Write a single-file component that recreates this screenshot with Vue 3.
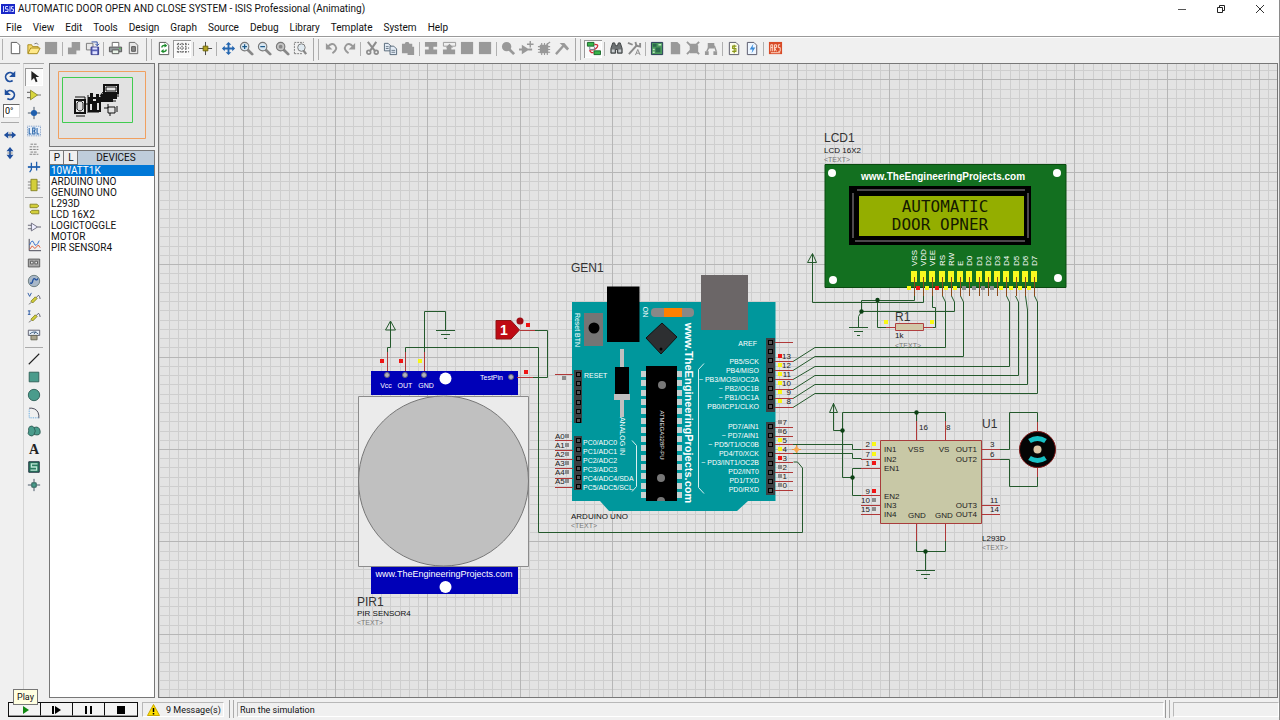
<script setup>
import { ref } from 'vue'

const angle = ref('0°')
const menus = ['File', 'View', 'Edit', 'Tools', 'Design', 'Graph', 'Source', 'Debug', 'Library', 'Template', 'System', 'Help']
const devices = ['10WATT1K', 'ARDUINO UNO', 'GENUINO UNO', 'L293D', 'LCD 16X2', 'LOGICTOGGLE', 'MOTOR', 'PIR SENSOR4']
const selected = ref('10WATT1K')

const toolbars = [
  [['new', 'open', 'save'], ['import', 'export'], ['print', 'area']],
  [['refresh', 'grid'], ['origin'], ['pan', 'zoomIn', 'zoomOut', 'zoomAll', 'zoomArea']],
  [['undo', 'redo'], ['cut', 'copy', 'paste'], ['blockCopy', 'blockMove', 'blockRotate', 'blockDelete'], ['pick', 'make', 'packaging', 'decompose']],
  [['autoroute'], ['search', 'assign'], ['explorer', 'newSheet', 'removeSheet', 'exitSheet'], ['bom', 'erc'], ['ares']]
]
const pressed = ['grid', 'autoroute', 'select']
const modes = [
  ['select', 'component', 'junction', 'label', 'script', 'bus', 'subcircuit'],
  ['terminal', 'pin', 'graph', 'tape', 'generator', 'voltage', 'current', 'instrument'],
  ['line', 'box', 'circle', 'arc', 'path', 'text', 'symbol', 'marker']
]

const G = '#999'
const sheet = (x, y, w, h, s = '#555', f = '#fff') =>
  `<path d="M${x} ${y}h${w - 3}l3 3v${h - 3}h-${w}z" fill="${f}" stroke="${s}"/>`
const lens = (mark, c = '#d8e6f0', s = '#777') =>
  `<path d="M9 9l5 5" stroke="#888" stroke-width="3" stroke-linecap="round"/><circle cx="6" cy="6" r="4.5" fill="${c}" stroke="${s}" stroke-width="1.2"/>${mark}`
const icons = {
  new: sheet(3.5, 1.5, 9, 12),
  open: '<path d="M2 13V4h4l1 2h6v2" fill="#f5d96b" stroke="#a68a1c"/><path d="M2 13.500l3-6h10l-3 6z" fill="#ffe98a" stroke="#a68a1c"/><path d="M9 3q3-2 4 1" fill="none" stroke="#777"/>',
  save: `<path d="M1 1h13v13H1z" fill="${G}"/>`,
  import: `<path d="M5 1h9v9h-4v4H1V7h4z" fill="${G}"/>`,
  export: '<path d="M1.500 2.500h7v7h-7z" fill="#e8e8e8" stroke="#777"/><path d="M6.500 6.500h8v8h-8z" fill="#5a62b8" stroke="#33398a"/><path d="M8 11h5v3H8zM8 7h5v2H8z" fill="#dfe2ff"/><path d="M7 1h6v4M11 3l2 2 2-2" fill="none" stroke="#2848a0"/>',
  print: '<path d="M4.500 6V1.500h7V6" fill="#fff" stroke="#666"/><path d="M1.500 6.500h13v5h-13z" fill="#92979a" stroke="#555"/><path d="M4.500 9.500h7v4h-7z" fill="#e9f4e9" stroke="#555"/><path d="M12 8h1.500" stroke="#3d3"/>',
  area: sheet(3.5, 1.5, 9, 12, '#666', '#e8e8e8') + '<path d="M6 6h4v5H6z" fill="#888" stroke="#555"/>',
  refresh: sheet(2.5, 1.5, 10, 13) + '<path d="M5 7q1-3 4-2M10 9q-1 3-4 2" fill="none" stroke="#1d8c2c" stroke-width="1.5"/><path d="M8 2.500l3 2.500-3 2zM7 8.500L4 11l3 2z" fill="#1d8c2c"/>',
  grid: '<path d="M2 3.500h13M2 7.500h13M2 11.500h13M3.500 2v12M7.500 2v12M11.500 2v12" stroke="#333" stroke-dasharray="1.500 1.500" fill="none"/>',
  origin: '<path d="M8 1v14M1 8h14" stroke="#444"/><path d="M5.500 5.500h5v5h-5z" fill="#b0a020" stroke="#6b6208"/>',
  pan: '<path d="M8 3v10M3 8h10" stroke="#2466b0" stroke-width="2"/><path d="M8 1l3 3H5zM8 15l3-3H5zM1 8l3-3v6zM15 8l-3-3v6z" fill="#2466b0"/>',
  zoomIn: lens('<path d="M3.500 6h5M6 3.500v5" stroke="#1d5a8a" stroke-width="1.300"/>'),
  zoomOut: lens('<path d="M3.500 6h5" stroke="#1d5a8a" stroke-width="1.300"/>'),
  zoomAll: lens('<circle cx="6" cy="6" r="2" fill="#888"/>', '#c4c4c4'),
  zoomArea: '<path d="M1.500 13.500v-12h10" fill="none" stroke="#777" stroke-dasharray="2 1"/><path d="M1.500 13.500h8" stroke="#777" stroke-dasharray="2 1"/><path d="M11 10l3 4" stroke="#888" stroke-width="2.500"/><circle cx="9" cy="7" r="4" fill="#dfe9f0" stroke="#777"/>',
  undo: `<path d="M4 6q5-5 8-1t-3 8" fill="none" stroke="${G}" stroke-width="2"/><path d="M2 2v7h7z" fill="${G}"/>`,
  redo: `<path d="M12 6q-5-5-8-1t3 8" fill="none" stroke="${G}" stroke-width="2"/><path d="M14 2v7H7z" fill="${G}"/>`,
  cut: `<path d="M3 1l8 10M12 1L5 11" stroke="#8d8d8d" stroke-width="2.200"/><circle cx="4" cy="12" r="2" fill="none" stroke="#8d8d8d" stroke-width="1.800"/><circle cx="12" cy="12" r="2" fill="none" stroke="#8d8d8d" stroke-width="1.800"/>`,
  copy: sheet(1.5, 2.5, 7, 8, '#567', '#e3ebf5') + sheet(7.5, 5.5, 7, 9, '#567', '#e3ebf5') + '<path d="M9 10h4M9 12h4M3 6h3M3 8h3" stroke="#678"/>',
  paste: `<path d="M1 3h3l1-2h3l1 2h3v3h2v9H7v-2H1z" fill="${G}"/>`,
  blockCopy: `<path d="M1 1h13v5h-4v3h4v5H1V9h4V6H1z" fill="${G}"/>`,
  blockMove: `<path d="M1.500 1.500h13v4h-13z" fill="none" stroke="${G}"/><path d="M8 3l4 4h-2v2h4v5H1V9h4V7H4z" fill="${G}"/>`,
  blockRotate: `<path d="M1 1h13v13H1z" fill="${G}"/>`,
  blockDelete: `<path d="M1 1h13v13H1z" fill="${G}"/>`,
  pick: `<circle cx="6" cy="6" r="5" fill="${G}"/><path d="M9 9l5 5" stroke="${G}" stroke-width="3"/>`,
  make: `<path d="M3 4l8 5-8 5zM0 8h3v2H0zM10 8h4v2h-4z" fill="${G}"/><path d="M12 0v7M8.500 3.500h7" stroke="${G}" stroke-width="1.500"/>`,
  packaging: `<path d="M3 4h9v9H3z" fill="${G}"/><path d="M1 6h13M1 9h13M1 12h13M5 2v13M8 2v13M11 2v13M10 4l4-3" stroke="${G}" stroke-width="1.200"/>`,
  decompose: `<path d="M1 14l8-9" stroke="${G}" stroke-width="2.500"/><path d="M5 2h5l5 6-2 2-5-5z" fill="${G}"/>`,
  autoroute: '<path d="M1.500 1.500h7v4h-7z" fill="#39b54a" stroke="#17642a"/><path d="M8.500 10.500h7v4h-7z" fill="#39b54a" stroke="#17642a"/><path d="M9 3.500q5 0 3 3t-6 3 0 3h2" fill="none" stroke="#d02c3a" stroke-width="1.300"/><path d="M4 6v3h5V6" fill="none" stroke="#789"/>',
  search: '<path d="M2 8l2-6h2l1 3h2l1-3h2l2 6v5h-5V9H7v4H2z" fill="#6d7173" stroke="#3d4142"/><path d="M3 9h3v3H3zM10 9h3v3h-3z" fill="#c9cdd0"/>',
  assign: `<path d="M2 14l9-10" stroke="#8a8a8a" stroke-width="2"/><path d="M9 1l1 4 4 1V2M1 2l5 2" stroke="#8a8a8a" stroke-width="2" fill="none"/><path d="M9 15l2.500-6 2.500 6M10 13h3" fill="none" stroke="#8a8a8a"/>`,
  explorer: '<path d="M1.500 1.500h12v13h-12z" fill="#4a9a5c" stroke="#235"/><path d="M3 3h4v3H3zM6 7h5v5H6z" fill="#2a6a4c"/><path d="M9 4h3M3 9h2M3 12h2" stroke="#bfe6c4" stroke-width="1.500"/>',
  newSheet: `<path d="M3 1h7l3 3v10H3z" fill="${G}"/>`,
  removeSheet: `<path d="M4 3h7l2 2v8H4z" fill="${G}"/><path d="M1 1l13 13M14 1L1 14" stroke="${G}" stroke-width="2"/>`,
  exitSheet: `<path d="M4 2h7v6H4zM1 11h4v4H1zM10 11h4v4h-4z" fill="${G}"/><path d="M3 11l2-4M11 5l2 6" stroke="${G}" stroke-width="1.500"/>`,
  bom: sheet(2.5, 1.5, 10, 13, '#556', '#fbfbe8') + '<path d="M10 5.500H6v2.500h3.500v3H5.500M7.700 4v9" fill="none" stroke="#8a9818" stroke-width="1.200"/>',
  erc: sheet(2.5, 1.5, 10, 13, '#556', '#eef6ff') + '<path d="M9 3L5 9h3l-1 4 4-6H8z" fill="#3a8ad8"/>',
  ares: '<path d="M1 1h14v13H1z" fill="#d84a26"/><path d="M3 11V4h2v7M3 7h2M7 11V4h2v3H7l2 4M13 4h-2v3h2v4h-2M3 12.500h10" fill="none" stroke="#ffe0d0"/>',
  select: '<path d="M5 1v11l3-3 2 5 2-1-2-5h4z" fill="#222"/>',
  component: '<path d="M0 5h4M0 11h4M11 8h5" stroke="#777" stroke-width="1.300"/><path d="M4 2.500L12 8l-8 5.500z" fill="#d8d63c" stroke="#88862a"/>',
  junction: '<path d="M8 1v14M1 8h14" stroke="#345"/><circle cx="8" cy="8" r="3.500" fill="#1f5fae"/>',
  label: '<path d="M0.500 2.500h15v11h-15z" fill="#e8f0fa" stroke="#6a8ab8" stroke-dasharray="1 1"/><path d="M2.500 4.500v7H5M6.500 4.500v7H9q1-2-1-3.500 2-1.500 1-3.500zM11.500 4.500v7H14" fill="none" stroke="#2462a8" stroke-width="1.200"/>',
  script: '<path d="M4 2.500h8M3 5.500h10M3 8.500h10M4 11.500h8M3 14h10" stroke="#777" stroke-dasharray="3 1"/>',
  bus: '<path d="M1 8h14" stroke="#1f5fae" stroke-width="2"/><path d="M5 3v8l-2 3M11 2v10" fill="none" stroke="#1f5fae" stroke-width="1.500"/>',
  subcircuit: '<path d="M1 4.500h14M1 8h14M1 11.500h14" stroke="#777"/><path d="M4.500 1.500h7v13h-7z" fill="#d3cf3a" stroke="#827f20"/>',
  terminal: '<path d="M3.500 2.500h8l2 2-2 2h-8zM5.500 9.500h8v4h-8l-2-2z" fill="#d3cf3a" stroke="#827f20"/>',
  pin: '<path d="M5 3.500L12 8l-7 4.500z" fill="#eef" stroke="#667"/><path d="M1 6h4M1 10h4M12 8h4" stroke="#556"/>',
  graph: '<path d="M2.500 1v13.500H16" fill="none" stroke="#334"/><path d="M3 8q3-8 5-2t6-3" fill="none" stroke="#2462c8"/><path d="M3 13l3-4 3 3 4-4 2 3" fill="none" stroke="#d84a26"/>',
  tape: '<path d="M1.500 3.500h13v9h-13z" fill="#a8a8a8" stroke="#555"/><path d="M4 6h3v3H4zM9 6h3v3H9z" fill="#e8e8e8" stroke="#555"/>',
  generator: '<circle cx="8" cy="8" r="6.500" fill="#a9b8c8" stroke="#677"/><path d="M3.500 10q2 2 3-2t3-2 3-1" fill="none" stroke="#1f4f9e" stroke-width="1.500"/>',
  voltage: '<path d="M1 1l2 4 2-4" fill="none" stroke="#1f4f9e"/><path d="M2 14l3-2 6-6" stroke="#777" fill="none"/><path d="M4.500 10.500l5-5 2 2-5 5z" fill="#d3cf3a" stroke="#827f20"/><path d="M11 6q3-5 4 2" fill="none" stroke="#556"/>',
  current: '<path d="M1 1h3M2.500 1v4M1 5h3" fill="none" stroke="#1f4f9e"/><path d="M2 14l3-2 6-6" stroke="#777" fill="none"/><path d="M4.500 10.500l5-5 2 2-5 5z" fill="#d3cf3a" stroke="#827f20"/><path d="M11 6q3-5 4 2" fill="none" stroke="#556"/>',
  instrument: '<path d="M1.500 2.500h13v6h-13z" fill="#e8f0f8" stroke="#556"/><path d="M3 7q5-5 10 0M8 7l2-3" fill="none" stroke="#357"/><path d="M4.500 8.500h7v5h-7z" fill="#aaa48c" stroke="#665"/>',
  line: '<path d="M2 14L14 2" stroke="#222" stroke-width="1.300"/>',
  box: '<path d="M2.500 2.500h11v11h-11z" fill="#4a9c8c" stroke="#2c5c54"/>',
  circle: '<circle cx="8" cy="8" r="6.500" fill="#4a9c8c" stroke="#2c5c54"/>',
  arc: '<path d="M2.500 2.500h3q7 1 8 8V14" fill="none" stroke="#334"/><path d="M2.500 4v9.500h11" fill="none" stroke="#49d" stroke-dasharray="1 1"/>',
  path: '<path d="M3 3q3-2 5 1 6-2 7 4t-7 4q-2 3-5 1t-1-5q-1-3 1-5z" fill="#4a9c8c" stroke="#2c5c54"/><path d="M8 4q3 4 0 8" fill="none" stroke="#2c5c54"/>',
  text: '<text x="8" y="14" text-anchor="middle" font-family="Liberation Serif, serif" font-weight="700" font-size="16" fill="#222">A</text>',
  symbol: '<path d="M2 2h12v12H2z" fill="#2c7d62" stroke="#123"/><path d="M12 4.500H5V8h6v3.500H4" fill="none" stroke="#bfe8d8" stroke-width="1.500"/>',
  marker: '<path d="M8 1v14M1 8h14" stroke="#345"/><path d="M5.500 5.500h5v5h-5z" fill="#4a9c8c" stroke="#2c5c54"/>',
  rotateCw: '<path d="M11 12a5 5 0 1 1 1-7" fill="none" stroke="#1f4f9e" stroke-width="2"/><path d="M14 1v7H7z" fill="#1f4f9e"/>',
  rotateCcw: '<path d="M5 12a5 5 0 1 0-1-7" fill="none" stroke="#1f4f9e" stroke-width="2"/><path d="M2 1v7h7z" fill="#1f4f9e"/>',
  flipH: '<path d="M3 8h10" stroke="#1f4f9e" stroke-width="2"/><path d="M1 8l5-4v8zM15 8l-5-4v8z" fill="#1f4f9e"/><path d="M8 5v6" stroke="#777"/>',
  flipV: '<path d="M8 3v10" stroke="#1f4f9e" stroke-width="2"/><path d="M8 1l4 5H4zM8 15l4-5H4z" fill="#1f4f9e"/><path d="M5 8h6" stroke="#777"/>'
}

// Snap grid of the sheet: ten minor cells to one major cell.
const STEP = 9.24
const range = (n) => Array.from({ length: n }, (_, i) => i)
const gridX = range(420).map((i) => ({ at: Math.round(150.2 + i * STEP - 159 + 159) + 0.5, major: i % 10 === 0 }))
const gridY = range(240).map((i) => ({ at: Math.round(-13 + i * STEP) + 0.5, major: i % 10 === 0 }))
const minorPath = gridX.filter((l) => !l.major).map((l) => `M${l.at} 0V2400`).join('') + gridY.filter((l) => !l.major).map((l) => `M0 ${l.at}H4200`).join('')
const majorPath = gridX.filter((l) => l.major).map((l) => `M${l.at} 0V2400`).join('') + gridY.filter((l) => l.major).map((l) => `M0 ${l.at}H4200`).join('')

const wires = [
  'M387.500 352v-4.500h3V321M385.500 330l5-9 5 9z',
  'M405.500 352v-4.500h133v185h264V468l-5-6h-4',
  'M424.500 352V311.500h21V330M436 330.500h19M441 334.500h9M444 338.500h3',
  'M533 377.500h14.500V330.500H535',
  'M793 361.500l22-14h130.500V302l-3-6',
  'M793 370.500l22-14h148.500V302l-3-6',
  'M793 379.500l22-13h194.500V302l-3-6',
  'M793 389.500l22-14h203.500V302l-3-6',
  'M793 398.500l22-14h212.500V310l-2-14',
  'M793 407.500l22-14h222.500V302l-3-6',
  'M914.500 296v4.500h-53v11l-3 5v11M849 327.500h19M854 331.500h9M857 335.500h3',
  'M923.500 296v6.500h-111V254M807.500 262.500l5-9 4 9z',
  'M951.500 296l3 6v9.500h-93M877.500 300v27.500h9',
  'M932.500 296v11.500h3v20h-3',
  'M793 444.500h59.500v5h9M793 453.500h59.500v5h9',
  'M861 468.500h-8.500v27h8.500M852.500 477.500h-10v-65h103V421M916.500 412v9',
  'M842.500 430.500h-9V403M829.500 412.500l4-9 4 9z',
  'M1000 449.500h9.500v-37h28V422M1000 459.500h9.500v27h28V477',
  'M916.500 541v10.500h29V541M925.500 551v19M916 570.500h19M921 574.500h9M924 578.500h3'
]
const leads = [
  'M387.500 371v-19M405.500 371v-19M424.500 371v-19M517 377.500h16M520 330.500h15',
  'M555 374.500h18M775 342.500h18M886 327.500h9M924 327.500h9',
  'M916.500 440v-19M945.500 440v-19M916.500 524v17M945.500 524v17M1037.500 431v-9M1037.500 468v9',
  ...[440, 450, 459, 468, 478, 487].map((y) => `M555 ${y}.500h18`),
  ...[361, 370, 379, 389, 398, 407, 427, 436, 444, 453, 462, 472, 481, 490].map((y) => `M775 ${y}.500h18`),
  ...[449, 459, 468, 495, 505, 514].map((y) => `M861 ${y}.500h19`),
  ...[449, 459, 505, 514].map((y) => `M982 ${y}.500h18`)
]
const junctions = [[877.5, 300], [861.5, 311.5], [842.5, 430.5], [852.5, 477.5], [916.5, 412.5], [925.5, 551.5]]

const R = '#f01414', Y = '#f8f814', N = '#8c8c8c'
const probes = [
  [382, 361, R], [401, 361, R], [420, 361, Y], [528, 325, R], [526, 372, R], [564, 378, N],
  [886, 322, Y], [932, 322, Y],
  ...[R, Y, Y, Y, Y, Y].map((c, i) => [780, 356 + i * 9, c]),
  ...[N, N, Y, Y, R, N, N, N].map((c, i) => [780, 422 + i * 9, c]),
  ...range(6).map((i) => [567, 436 + i * 9, N]),
  [874, 444, Y], [874, 454, Y], [874, 463, R], [874, 491, R], [874, 500, N], [874, 509, N]
]
const lcdPins = ['VSS', 'VDD', 'VEE', 'RS', 'RW', 'E', 'D0', 'D1', 'D2', 'D3', 'D4', 'D5', 'D6', 'D7'].map((name, i) => ({
  name, x: Math.round(914 + i * STEP), probe: [Y, R, Y, R, Y, Y, N, N, N, N, Y, Y, Y, Y][i]
}))
const headers = [
  { x: 574, y: 370, w: 8, h: 53, n: 6 }, { x: 574, y: 436, w: 8, h: 54, n: 6 },
  { x: 766, y: 338, w: 9, h: 74, n: 8 }, { x: 766, y: 422, w: 9, h: 73, n: 8 }
]

// [text, x, y, class, rotation]
const labels = [
  ['LCD1', 824, 142, 'ref'], ['LCD 16X2', 824, 153, 'val'], ['<TEXT>', 824, 162, 'ph'],
  ['GEN1', 571, 272, 'ref'], ['ARDUINO UNO', 571, 519, 'val'], ['<TEXT>', 571, 528, 'ph'],
  ['PIR1', 357, 606, 'ref'], ['PIR SENSOR4', 357, 616, 'val'], ['<TEXT>', 357, 625, 'ph'],
  ['U1', 982, 428, 'ref'], ['L293D', 982, 541, 'val'], ['<TEXT>', 982, 550, 'ph'],
  ['R1', 895, 321, 'ref'], ['1k', 895, 338, 'val'], ['<TEXT>', 895, 348, 'ph'],
  ['Vcc', 386, 388, 'wh mid'], ['OUT', 405, 388, 'wh mid'], ['GND', 426, 388, 'wh mid'], ['TestPin', 503, 380, 'wh end'],
  ['www.TheEngineeringProjects.com', 444, 577, 'pirurl mid'],
  ['www.TheEngineeringProjects.com', 943, 180, 'lcdurl mid'],
  ['www.TheEngineeringProjects.com', 685, 413, 'unourl mid', 90],
  ['AUTOMATIC', 945, 212, 'lcd mid'], ['DOOR OPNER', 940, 230, 'lcd mid'],
  ['Reset BTN', 575, 330, 'wh mid', 90], ['ON', 643, 312, 'wh mid', 90], ['ANALOG IN', 620, 436, 'wh mid', 90],
  ['ATMEGA328P-PU', 660, 435, 'tiny mid', 90],
  ['RESET', 584, 378, 'wh'], ['AREF', 757, 346, 'wh end'],
  ...['PC0/ADC0', 'PC1/ADC1', 'PC2/ADC2', 'PC3/ADC3', 'PC4/ADC4/SDA', 'PC5/ADC5/SCL'].map((t, i) => [t, 583, 445 + i * 9, 'wh']),
  ...['PB5/SCK', 'PB4/MISO', '~ PB3/MOSI/OC2A', '~ PB2/OC1B', '~ PB1/OC1A', 'PB0/ICP1/CLKO'].map((t, i) => [t, 759, 364 + i * 9, 'wh end']),
  ...['PD7/AIN1', '~ PD7/AIN1', '~ PD5/T1/OC0B', 'PD4/T0/XCK', '~ PD3/INT1/OC2B', 'PD2/INT0', 'PD1/TXD', 'PD0/RXD'].map((t, i) => [t, 759, 429 + i * 9, 'wh end']),
  ...range(6).map((i) => [`A${i}`, 555, 439 + i * 9, 'num']),
  ...range(6).map((i) => [`${13 - i}`, 791, 359 + i * 9, 'num end']),
  ...range(8).map((i) => [`${7 - i}`, 787, 425 + i * 9, 'num end']),
  ['2', 870, 447, 'num end'], ['7', 870, 457, 'num end'], ['1', 870, 466, 'num end'],
  ['9', 870, 494, 'num end'], ['10', 870, 503, 'num end'], ['15', 870, 512, 'num end'],
  ['3', 990, 447, 'num'], ['6', 990, 457, 'num'], ['11', 990, 503, 'num'], ['14', 990, 512, 'num'],
  ['16', 919, 430, 'num'], ['8', 946, 430, 'num'],
  ['IN1', 884, 452, 'chip'], ['IN2', 884, 462, 'chip'], ['EN1', 884, 471, 'chip'], ['EN2', 884, 499, 'chip'], ['IN3', 884, 508, 'chip'], ['IN4', 884, 517, 'chip'],
  ['OUT1', 977, 452, 'chip end'], ['OUT2', 977, 462, 'chip end'], ['OUT3', 977, 508, 'chip end'], ['OUT4', 977, 517, 'chip end'],
  ['VSS', 916, 452, 'chip mid'], ['VS', 944, 452, 'chip mid'], ['GND', 917, 518, 'chip mid'], ['GND', 944, 518, 'chip mid']
]
const playback = [
  { name: 'Play', d: 'M14 3v8l6-4z', fill: '#138a13' },
  { name: 'Step', d: 'M11 3h2v8h-2zM14 3v8l6-4z', fill: '#000' },
  { name: 'Pause', d: 'M12 3h2v8h-2zM17 3h2v8h-2z', fill: '#000' },
  { name: 'Stop', d: 'M12 3h8v8h-8z', fill: '#000' }
]
</script>

<template>
  <div class="window">
    <header class="titlebar">
      <svg class="logo" width="14" height="12" viewBox="0 0 14 12" aria-hidden="true">
        <path d="M0 1h14v10H0z" fill="#1a28c8" /><path d="M2.500 3v6M7 3.500H4.500V6H7v2.500H4M9 3v6M12.500 3.500h-2V6h2v2.500h-2" fill="none" stroke="#cfd6ff" />
      </svg>
      <h1>AUTOMATIC DOOR OPEN AND CLOSE SYSTEM - ISIS Professional (Animating)</h1>
      <div class="controls">
        <button aria-label="Minimize"><svg width="10" height="10"><path d="M1 5.500h8" stroke="#555" /></svg></button>
        <button aria-label="Restore"><svg width="10" height="10"><path d="M1.500 3.500h5v5h-5zM3.500 3V1.500h5v5H7" fill="none" stroke="#222" /></svg></button>
        <button aria-label="Close"><svg width="10" height="10"><path d="M1 1l8 8M9 1L1 9" stroke="#333" /></svg></button>
      </div>
    </header>

    <nav class="menubar">
      <button v-for="m in menus" :key="m">{{ m }}</button>
    </nav>

    <div class="toolbars">
      <div v-for="(bar, b) in toolbars" :key="b" class="bar">
        <div v-for="(group, g) in bar" :key="g" class="group">
          <button v-for="name in group" :key="name" class="tool" :class="{ pressed: pressed.includes(name) }" :aria-label="name">
            <svg width="15" height="15" viewBox="0 0 16 16" v-html="icons[name]"></svg>
          </button>
        </div>
      </div>
    </div>

    <main class="workspace">
      <div class="rail orient">
        <button class="tool" aria-label="Rotate clockwise"><svg width="14" height="14" viewBox="0 0 16 16" v-html="icons.rotateCw"></svg></button>
        <button class="tool" aria-label="Rotate anticlockwise"><svg width="14" height="14" viewBox="0 0 16 16" v-html="icons.rotateCcw"></svg></button>
        <input v-model="angle" aria-label="Angle" />
        <div class="flips">
          <button class="tool" aria-label="Mirror horizontally"><svg width="14" height="14" viewBox="0 0 16 16" v-html="icons.flipH"></svg></button>
          <button class="tool" aria-label="Mirror vertically"><svg width="14" height="14" viewBox="0 0 16 16" v-html="icons.flipV"></svg></button>
        </div>
      </div>
      <div class="rail modes">
        <div v-for="(group, g) in modes" :key="g" class="modegroup">
          <button v-for="name in group" :key="name" class="tool" :class="{ pressed: pressed.includes(name) }" :aria-label="name">
            <svg width="14" height="14" viewBox="0 0 16 16" v-html="icons[name]"></svg>
          </button>
        </div>
      </div>

      <aside class="side">
        <div class="overview">
          <svg width="104" height="82" viewBox="0 -1 104 82" aria-hidden="true">
            <path d="M8.500 6.500h87v67h-87z" fill="none" stroke="#f0a060" />
            <path d="M12.500 12.500h70v45h-70z" fill="none" stroke="#40cc50" />
            <g fill="none" stroke="#111">
              <path d="M25 35h10v13H25zM54 20h14v8H54z" stroke-width="2" />
              <path d="M25 32h10v3M26 51h9M38 30v18M39 47h10M56 22h10v4H56zM51 33h13M51 36h15M50 31h13M58 42h7v6h-7zM60 48v3M67 41v6M54 43h4M58 39v4M36 39h4M68 28v4M53 27l-3 4" />
              <path d="M39 33h11v13H39z" stroke-width="2" />
            </g>
            <path d="M40 28h3v11h-3zM46 29h3v9h-3zM42 36h5v11h-5zM51 29h12v8H51zM60 28h7v6h-7z" fill="#111" />
            <path d="M27 38q3-4 6 0v6q-3 4-6 0z" fill="#ddd" stroke="#222" />
          </svg>
        </div>
        <section class="devices">
          <div class="devhead">
            <button>P</button><button>L</button><h2>DEVICES</h2>
          </div>
          <ul>
            <li v-for="d in devices" :key="d" :class="{ on: d === selected }" @click="selected = d">{{ d }}</li>
          </ul>
        </section>
      </aside>

      <section class="canvas">
        <svg class="sheet" width="100%" height="100%" role="img" aria-label="Schematic">
          <g transform="translate(-159 -64)">
            <path :d="minorPath" stroke="#cecece" fill="none" />
            <path :d="majorPath" stroke="#b6b6b6" fill="none" />

            <!-- PIR sensor -->
            <path d="M371 371h147v24H371zM371 567h147v27H371z" fill="#0000b8" />
            <path d="M358.500 396.500h170v170h-170z" fill="#ebebeb" stroke="#8c8c8c" />
            <circle cx="443.500" cy="481" r="85" fill="#c0c0c0" stroke="#777" />
            <circle cx="445.500" cy="378.500" r="6" fill="#fff" /><circle cx="445.500" cy="587" r="6" fill="#fff" />
            <circle v-for="p in [[387, 375], [405, 375], [424, 375], [511, 377]]" :key="p[0]" :cx="p[0]" :cy="p[1]" r="2.500" fill="#b0b0c0" stroke="#667" />

            <!-- Logic toggle -->
            <path d="M496 320.500h15l8.500 9.500-8.500 9h-15z" fill="#bf0a14" stroke="#8c1414" />
            <circle cx="520" cy="321" r="3.500" fill="#a00c14" />
            <text x="504" y="335" class="toggle mid">1</text>

            <!-- Arduino board -->
            <path d="M572 302h203.500v199H748l-11 10H609l-9-10h-28z" fill="#00979c" />
            <path d="M584 313h19v33h-19z" fill="#757575" /><circle cx="594" cy="328" r="5.500" />
            <path d="M607 286.500h32.500V342H607z" />
            <path d="M701 275h47v55h-47z" fill="#6b6667" />
            <rect x="651" y="308" width="43" height="9" rx="4" fill="#888" /><path d="M664 308h18v9h-18z" fill="#ff8000" />
            <path d="M662 323l15 14-16 17-15-16z" fill="#2d2f31" stroke="#111" /><circle cx="661" cy="349" r="1.500" />
            <path d="M620 349h4v18h-4zM620 394h4v23h-4zM614 394h16v6h-16z" fill="#c0c0c0" /><path d="M615 367h14v27h-14z" />
            <path d="M646 366h31v135h-31z" />
            <path v-for="i in 14" :key="'pad' + i" :d="`M641 ${371 + Math.round((i - 1) * 9.3)}h5v6h-5zM677 ${371 + Math.round((i - 1) * 9.3)}h5v6h-5z`" fill="#c8d0d0" />
            <circle cx="662" cy="385" r="4" fill="#777" /><circle cx="661" cy="478" r="4" fill="#777" /><path d="M657 501a4 4 0 0 1 8 0z" fill="#777" />
            <path d="M704 363.500l-5.500 6v118l5.500 6M632 440.500l4.500 5v41l-4.500 5" fill="none" stroke="#d8f0f0" />
            <template v-for="(h, k) in headers" :key="k">
              <rect :x="h.x" :y="h.y" :width="h.w" :height="h.h" fill="#3c4042" />
              <rect v-for="i in h.n" :key="i" :x="h.x + 2.5" :y="h.y + 2.5 + Math.round((i - 1) * 9.2)" width="4" height="4" fill="#555" stroke="#000" />
            </template>

            <!-- LCD module -->
            <path d="M825 164.500h241v123H825z" fill="#137020" stroke="#0a4a10" />
            <circle v-for="p in [[832, 173], [1057, 173], [833, 280], [1058, 278]]" :key="p.join()" :cx="p[0]" :cy="p[1]" r="4" fill="#fff" />
            <path d="M849 186h182v59H849z" />
            <path d="M857 189h168v2H857zM855 240h170v2H855zM852 193h2v45h-2zM1027 193h2v45h-2z" fill="#4c484c" />
            <path d="M859 196h165v40H859z" fill="#94ae00" />
            <g v-for="p in lcdPins" :key="p.name">
              <rect :x="p.x - 3" y="271" width="6" height="11" fill="#f8f820" />
              <path :d="`M${p.x + 0.5} 277v19`" stroke="#8c4a1c" />
              <rect :x="p.x - 7" y="286" width="4" height="4" :fill="p.probe" />
              <text :transform="`translate(${p.x + 3} 266) rotate(-90)`" class="wh pinname">{{ p.name }}</text>
            </g>

            <!-- Resistor, motor driver and motor -->
            <path d="M895.500 323.500h28v7h-28z" fill="#d2c8a8" stroke="#b04040" />
            <path d="M880.500 440.500h101v83h-101z" fill="#c8c8a6" stroke="#a83c3c" />
            <circle cx="1037.500" cy="449.500" r="18" fill="#050505" stroke="#7c1414" />
            <path d="M1029.500 441q8-5 16 0M1029.500 458q8 5 16 0" fill="none" stroke="#18c0c4" stroke-width="5" />
            <circle cx="1037.500" cy="449.500" r="4" fill="#dcc8a8" />
            <path d="M796.500 445v9M792 449.500h9" stroke="#f09030" /><path d="M796.500 446l3 3.500-3 3.500-3-3.500z" fill="#f8a850" />

            <path v-for="(d, i) in wires" :key="'w' + i" :d="d" fill="none" stroke="#24592c" />
            <path v-for="(d, i) in leads" :key="'l' + i" :d="d" fill="none" stroke="#b03838" />
            <circle v-for="(p, i) in junctions" :key="'j' + i" :cx="p[0]" :cy="p[1]" r="2.200" fill="#0c4014" />
            <rect v-for="(p, i) in probes" :key="'p' + i" :x="p[0] - 2" :y="p[1] - 2" width="4" height="4" :fill="p[2]" />

            <text v-for="(l, i) in labels" :key="'t' + i" :class="l[3]" :transform="`translate(${l[1]} ${l[2]})` + (l[4] ? ` rotate(${l[4]})` : '')">{{ l[0] }}</text>
          </g>
        </svg>
      </section>
    </main>

    <footer class="status">
      <div class="transport">
        <button v-for="p in playback" :key="p.name" :aria-label="p.name">
          <svg width="31" height="13"><path :d="p.d" :fill="p.fill" /></svg>
        </button>
        <span class="tip" role="tooltip">Play</span>
      </div>
      <div class="messages">
        <svg width="13" height="12" viewBox="0 0 13 12" aria-hidden="true"><path d="M6.500 0.500l6 11h-12z" fill="#ffdf00" stroke="#c8a800" /><path d="M6.500 4v4M6.500 9v1.500" stroke="#000" stroke-width="1.500" /></svg>
        <span>9 Message(s)</span>
      </div>
      <div class="hint">Run the simulation</div>
      <div class="coords"></div>
    </footer>
  </div>
</template>

<style>
html, body { margin: 0; background: #f0f0f0; }
</style>

<style scoped>
.window {
  display: flex; flex-direction: column; height: 100vh; box-sizing: border-box; overflow: hidden;
  background: #f0f0f0; border-right: 1px solid #8a8a8a; color: #111;
  font-family: Roboto, "Liberation Sans", sans-serif; font-size: 10px;
}
button { border: 0; padding: 0; margin: 0; background: none; color: inherit; font: inherit; }
svg { display: block; }
h1, h2, ul { margin: 0; padding: 0; font-weight: 400; }

.titlebar { display: flex; align-items: center; height: 18px; padding-left: 1px; background: #fff; }
.titlebar h1 { flex: 1; margin-left: 3px; font: 10px/18px Roboto, "Liberation Sans", sans-serif; white-space: nowrap; }
.controls { display: flex; }
.controls button { width: 39px; display: flex; justify-content: center; }

.menubar { display: flex; gap: 11px; height: 18px; padding-left: 6px; background: #fff; border-bottom: 1px solid #9a9a9a; }
.menubar button { font: 10px/19px Roboto, "Liberation Sans", sans-serif; }

.toolbars { display: flex; gap: 13px; height: 24px; align-items: center; padding: 0 0 2px 6px; border-top: 1px solid #fff; box-sizing: border-box; }
.bar { display: flex; gap: 5px; position: relative; }
.bar::before { content: ""; position: absolute; left: -4px; top: -1px; width: 1px; height: 21px; background: #b0b0b0; }
.bar:not(:last-child)::after { content: ""; position: absolute; right: -5px; top: -2px; width: 1px; height: 23px; background: #a8a8a8; }
.group { display: flex; position: relative; }
.group + .group::before { content: ""; position: absolute; left: -3px; top: 2px; width: 1px; height: 14px; background: #b0b0b0; }
.tool { width: 18px; height: 18px; display: flex; align-items: center; justify-content: center; }
.pressed { background: #fafafa; box-shadow: inset 1px 1px #999, inset -1px -1px #fff; }

.workspace { display: flex; flex: 1; min-height: 0; padding: 2px 1px 0 0; }
.rail { display: flex; flex-direction: column; align-items: center; padding-top: 4px; border-top: 1px solid #aaa; }
.orient { width: 20px; margin-right: 3px; }
.orient input { width: 17px; height: 14px; margin-left: 3px; padding: 0 1px; box-sizing: border-box; border: 1px solid #777; border-color: #666 #ddd #ddd #666; background: #fff; font: 9px/12px Roboto, sans-serif; }
.flips { margin-top: 4px; padding-top: 3px; border-top: 1px solid #aaa; }
.modes { width: 20px; gap: 6px; margin-right: 1px; border-left: 1px solid #d4d4d4; }
.modegroup { position: relative; }
.modegroup + .modegroup::before { content: ""; position: absolute; left: 0; right: 0; top: -3px; height: 1px; background: #aaa; }

.side { display: flex; flex-direction: column; gap: 3px; width: 106px; margin: 0 3px 0 4px; }
.overview { border: 1px solid #777; background: #e2e2e2; }
.devices { flex: 1; border: 1px solid #777; background: #fff; }
.devhead { display: flex; height: 14px; background: #bfcddb; }
.devhead button { width: 14px; background: #f0f0f0; box-shadow: inset -1px -1px #777; line-height: 14px; }
.devhead h2 { flex: 1; text-align: center; font-size: 10px; line-height: 14px; }
.devices ul { list-style: none; }
.devices li { padding-left: 1px; font-size: 10px; line-height: 11px; }
.devices li.on { background: #0078d7; color: #fff; }

.canvas { flex: 1; min-width: 0; border: 1px solid #777; background: #e3e3e3; overflow: hidden; }

.status { display: flex; align-items: center; height: 22px; padding: 1px 0 0 8px; box-sizing: border-box; white-space: nowrap; font-size: 9px; }
.transport { display: flex; position: relative; border: 1px solid #111; background: #f4f4f4; }
.transport button { width: 32px; height: 13px; border-right: 1px solid #111; border-bottom: 1px solid #999; box-sizing: border-box; }
.transport button:nth-of-type(4) { border-right: 0; }
.tip { position: absolute; left: 4px; top: -14px; padding: 0 3px; border: 1px solid #777; background: #ffffe1; font-size: 9px; line-height: 14px; }
.messages { display: flex; align-items: center; gap: 6px; width: 82px; height: 15px; margin-left: 4px; padding-left: 4px; box-sizing: border-box; border: 1px solid #b8b8b8; border-right-color: #fff; border-bottom-color: #fff; }
.hint, .coords { height: 15px; line-height: 14px; box-sizing: border-box; border: 1px solid #b8b8b8; border-right-color: #fff; border-bottom-color: #fff; position: relative; }
.hint { flex: 1; margin-left: 13px; padding-left: 2px; }
.coords { width: 106px; margin-left: 9px; }
.hint::before, .coords::before { content: ""; position: absolute; left: -9px; top: -3px; width: 3px; height: 18px; border-left: 1px solid #999; border-right: 1px solid #aaa; }

text { font-family: "Liberation Sans", sans-serif; font-size: 8px; fill: #222; white-space: pre; }
.mid { text-anchor: middle; }
.end { text-anchor: end; }
.ref { font-size: 12px; fill: #333; }
.val { font-size: 8px; fill: #111; }
.ph { font-size: 7px; fill: #777; }
.num { font-size: 8px; }
.chip { font-size: 8px; }
.wh { font-size: 7px; fill: #fff; }
.pinname { font-size: 8px; }
.tiny { font-size: 6px; fill: #eee; }
.pirurl { font-size: 9px; fill: #fff; }
.lcdurl { font-size: 10px; font-weight: 700; fill: #fff; }
.unourl { font-size: 11px; font-weight: 700; fill: #fff; }
.toggle { font-size: 14px; font-weight: 700; fill: #fff; }
.lcd { font-family: "DejaVu Sans Mono", monospace; font-size: 16px; fill: #141a00; }
</style>
